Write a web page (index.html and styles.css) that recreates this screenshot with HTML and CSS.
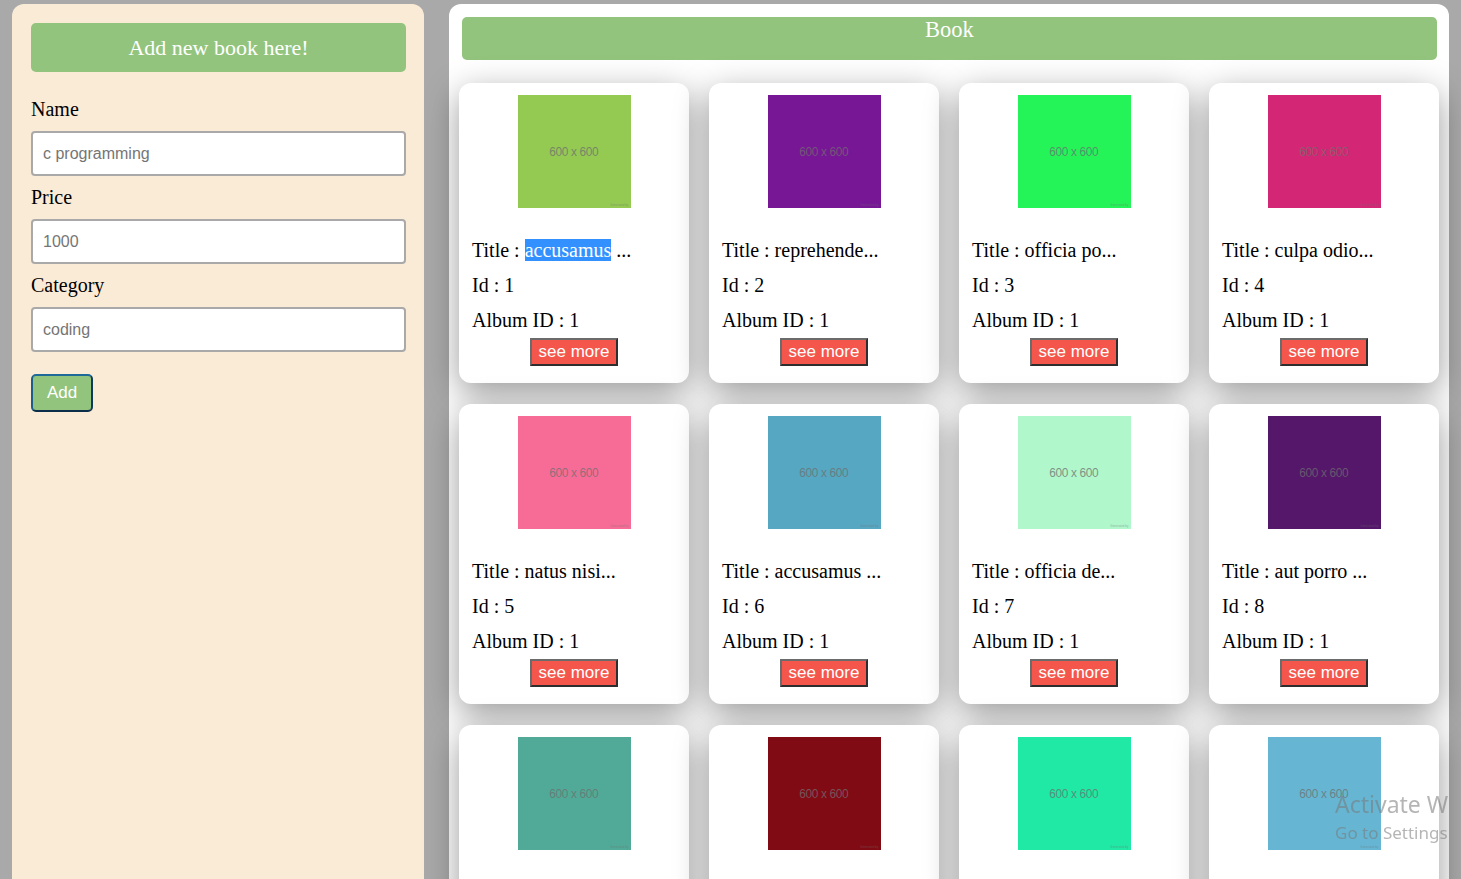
FILE: index.html
```html
<!DOCTYPE html>
<html lang="en">
<head>
<meta charset="utf-8">
<title>Books</title>
<link rel="stylesheet" href="styles.css">
</head>
<body>
<div class="page">
  <aside class="form-panel">
    <div class="form-title">Add new book here!</div>
    <form class="book-form">
      <label class="field-label" for="name">Name</label>
      <input class="field-input" id="name" type="text" placeholder="c programming">
      <label class="field-label" for="price">Price</label>
      <input class="field-input" id="price" type="text" placeholder="1000">
      <label class="field-label" for="category">Category</label>
      <input class="field-input" id="category" type="text" placeholder="coding">
      <button class="add-btn" type="button">Add</button>
    </form>
  </aside>

  <main class="book-panel">
    <div class="book-title">Book</div>
    <div class="grid">
      <div class="card">
        <div class="thumb" style="background:#94c952"><span class="dim">600 x 600</span><span class="gen">Generated by</span></div>
        <p class="line">Title : <span class="sel">accusamus</span> ...</p>
        <p class="line">Id : 1</p>
        <p class="line last">Album ID : 1</p>
        <button class="more-btn" type="button">see more</button>
      </div>
      <div class="card">
        <div class="thumb" style="background:#771796"><span class="dim">600 x 600</span><span class="gen">Generated by</span></div>
        <p class="line">Title : reprehende...</p>
        <p class="line">Id : 2</p>
        <p class="line last">Album ID : 1</p>
        <button class="more-btn" type="button">see more</button>
      </div>
      <div class="card">
        <div class="thumb" style="background:#24f458"><span class="dim">600 x 600</span><span class="gen">Generated by</span></div>
        <p class="line">Title : officia po...</p>
        <p class="line">Id : 3</p>
        <p class="line last">Album ID : 1</p>
        <button class="more-btn" type="button">see more</button>
      </div>
      <div class="card">
        <div class="thumb" style="background:#d32775"><span class="dim">600 x 600</span><span class="gen">Generated by</span></div>
        <p class="line">Title : culpa odio...</p>
        <p class="line">Id : 4</p>
        <p class="line last">Album ID : 1</p>
        <button class="more-btn" type="button">see more</button>
      </div>

      <div class="card">
        <div class="thumb" style="background:#f76c97"><span class="dim">600 x 600</span><span class="gen">Generated by</span></div>
        <p class="line">Title : natus nisi...</p>
        <p class="line">Id : 5</p>
        <p class="line last">Album ID : 1</p>
        <button class="more-btn" type="button">see more</button>
      </div>
      <div class="card">
        <div class="thumb" style="background:#56a7c2"><span class="dim">600 x 600</span><span class="gen">Generated by</span></div>
        <p class="line">Title : accusamus ...</p>
        <p class="line">Id : 6</p>
        <p class="line last">Album ID : 1</p>
        <button class="more-btn" type="button">see more</button>
      </div>
      <div class="card">
        <div class="thumb" style="background:#b0f7cb"><span class="dim">600 x 600</span><span class="gen">Generated by</span></div>
        <p class="line">Title : officia de...</p>
        <p class="line">Id : 7</p>
        <p class="line last">Album ID : 1</p>
        <button class="more-btn" type="button">see more</button>
      </div>
      <div class="card">
        <div class="thumb" style="background:#54176a"><span class="dim">600 x 600</span><span class="gen">Generated by</span></div>
        <p class="line">Title : aut porro ...</p>
        <p class="line">Id : 8</p>
        <p class="line last">Album ID : 1</p>
        <button class="more-btn" type="button">see more</button>
      </div>

      <div class="card">
        <div class="thumb" style="background:#51aa97"><span class="dim">600 x 600</span><span class="gen">Generated by</span></div>
        <p class="line">Title : qui eius q...</p>
        <p class="line">Id : 9</p>
        <p class="line last">Album ID : 1</p>
        <button class="more-btn" type="button">see more</button>
      </div>
      <div class="card">
        <div class="thumb" style="background:#810b15"><span class="dim">600 x 600</span><span class="gen">Generated by</span></div>
        <p class="line">Title : beatae ve...</p>
        <p class="line">Id : 10</p>
        <p class="line last">Album ID : 1</p>
        <button class="more-btn" type="button">see more</button>
      </div>
      <div class="card">
        <div class="thumb" style="background:#1fe9a4"><span class="dim">600 x 600</span><span class="gen">Generated by</span></div>
        <p class="line">Title : nihil aut...</p>
        <p class="line">Id : 11</p>
        <p class="line last">Album ID : 1</p>
        <button class="more-btn" type="button">see more</button>
      </div>
      <div class="card">
        <div class="thumb" style="background:#66b6d3"><span class="dim">600 x 600</span><span class="gen">Generated by</span></div>
        <p class="line">Title : minima au...</p>
        <p class="line">Id : 12</p>
        <p class="line last">Album ID : 1</p>
        <button class="more-btn" type="button">see more</button>
      </div>
    </div>
  </main>
</div>

<div class="watermark">
  <div class="wm-big">Activate Windows</div>
  <div class="wm-small">Go to Settings to activate Windows.</div>
</div>
</body>
</html>
```

FILE: styles.css
```css
html, body {
  margin: 0;
  padding: 0;
}

body {
  background: #a9a9a9;
  font-family: "Liberation Serif", "Times New Roman", serif;
  color: #000;
}

.page {
  display: flex;
  align-items: stretch;
  gap: 25px;
  padding: 4px 12px 0 12px;
}

/* ---------- left form panel ---------- */
.form-panel {
  flex: 0 0 412px;
  box-sizing: border-box;
  background: #faebd7;
  border-radius: 12px 12px 0 0;
  padding: 19px 18px 20px 19px;
}

.form-title {
  height: 49px;
  line-height: 49px;
  background: #93c47d;
  border-radius: 5px;
  color: #fff;
  text-align: center;
  font-size: 22px;
}

.book-form {
  display: flex;
  flex-direction: column;
  align-items: flex-start;
  padding-top: 16px;
}

.field-label {
  display: block;
  font-size: 20px;
  line-height: 23px;
  margin: 10px 0 10px 0;
}

.field-input {
  box-sizing: border-box;
  width: 375px;
  height: 45px;
  border: 2px solid #a9a9a9;
  border-radius: 4px;
  background: #fff;
  padding: 0 10px;
  margin: 0;
  font-family: "Liberation Sans", Arial, sans-serif;
  font-size: 16px;
  color: #333;
  outline: none;
}

.field-input::placeholder {
  color: #757575;
}

.add-btn {
  box-sizing: border-box;
  margin-top: 22px;
  width: 62px;
  height: 38px;
  padding: 0;
  background: #93c47d;
  color: #fff;
  font-family: "Liberation Sans", Arial, sans-serif;
  font-size: 17px;
  border: 2px solid;
  border-color: #1f6a98 #0e3a5a #0b2f4a #1a5f8a;
  border-radius: 5px;
  cursor: pointer;
}

/* ---------- right book panel ---------- */
.book-panel {
  flex: 0 0 1000px;
  box-sizing: border-box;
  background: #fff;
  border-radius: 12px 12px 0 0;
  padding: 13px 10px 30px 10px;
}

.book-title {
  height: 43px;
  line-height: 26px;
  margin: 0 2px 23px 3px;
  background: #93c47d;
  border-radius: 5px;
  color: #fff;
  text-align: center;
  font-size: 22.5px;
}

.grid {
  display: grid;
  grid-template-columns: repeat(4, 230px);
  column-gap: 20px;
  row-gap: 21px;
}

.card {
  box-sizing: border-box;
  height: 300px;
  background: #fff;
  border-radius: 12px;
  box-shadow: 0 10px 34px rgba(0, 0, 0, 0.4);
  padding: 12px 13px 0 13px;
  display: flex;
  flex-direction: column;
  align-items: flex-start;
}

.thumb {
  position: relative;
  align-self: center;
  width: 113px;
  height: 113px;
  flex: 0 0 113px;
  display: flex;
  align-items: center;
  justify-content: center;
  margin-bottom: 31px;
}

.dim {
  font-family: "Liberation Sans", Arial, sans-serif;
  font-size: 13.5px;
  letter-spacing: -0.4px;
  color: rgba(110, 110, 110, 0.75);
  transform: scaleX(0.88);
}

.gen {
  position: absolute;
  right: 2px;
  bottom: 1px;
  font-family: "Liberation Sans", Arial, sans-serif;
  font-size: 3px;
  color: rgba(110, 110, 110, 0.5);
}

.line {
  margin: 0 0 12px 0;
  font-size: 20px;
  line-height: 23px;
  white-space: nowrap;
}

.line.last {
  margin-bottom: 6px;
}

.sel {
  background: #3390ff;
  color: #fff;
}

.more-btn {
  box-sizing: border-box;
  align-self: center;
  height: 28px;
  padding: 0 7px;
  background: #f5564c;
  color: #fff;
  font-family: "Liberation Sans", Arial, sans-serif;
  font-size: 17px;
  line-height: 24px;
  border: 2px solid;
  border-color: #6b6b6b #2e2e2e #2e2e2e #6b6b6b;
  border-radius: 0;
  cursor: pointer;
}

/* ---------- OS watermark overlay ---------- */
.watermark {
  position: fixed;
  left: 1335px;
  top: 787px;
  width: 114px;
  overflow: hidden;
  white-space: nowrap;
  font-family: "Noto Sans", "Open Sans", sans-serif;
  color: rgba(120, 120, 120, 0.55);
  pointer-events: none;
}

.wm-big {
  font-size: 23px;
  line-height: 34px;
}

.wm-small {
  font-size: 17px;
  line-height: 24px;
}
```
